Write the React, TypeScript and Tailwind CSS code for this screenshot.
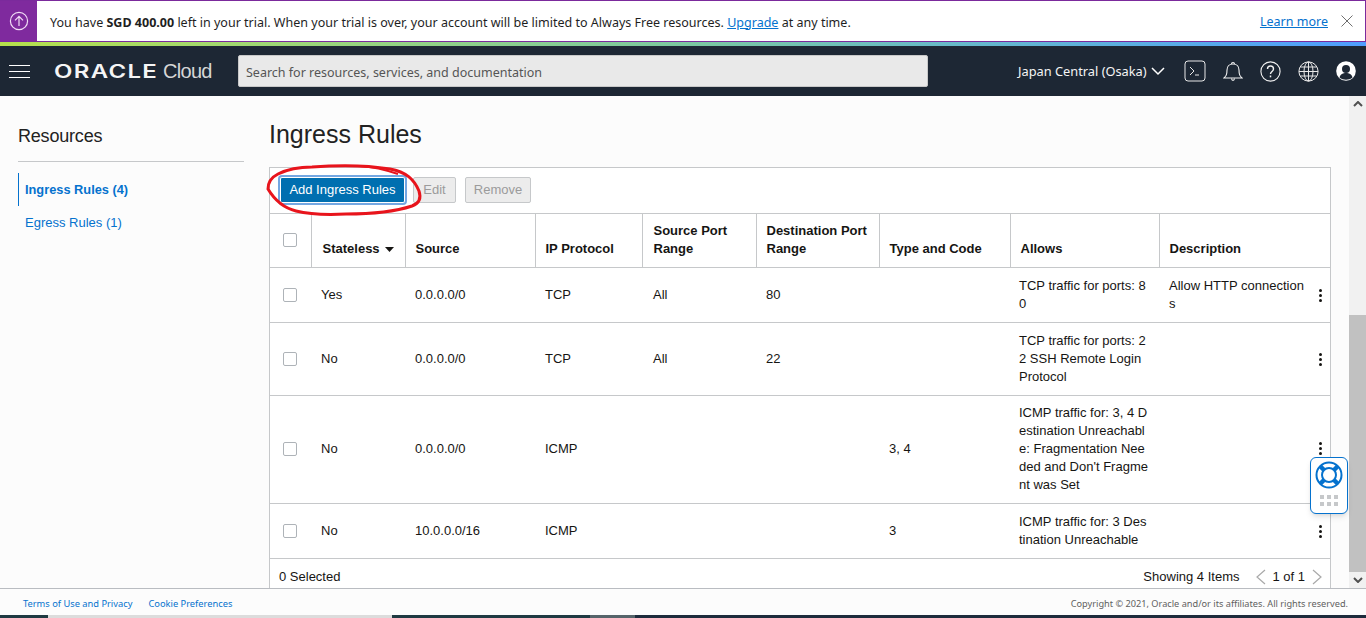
const rows = [
  { h: "h-[55px]", stateless: "Yes", source: "0.0.0.0/0", proto: "TCP", spr: "All", dpr: "80", tc: "", allows: ["TCP traffic for ports: 8", "0"], desc: ["Allow HTTP connection", "s"] },
  { h: "h-[73px]", stateless: "No", source: "0.0.0.0/0", proto: "TCP", spr: "All", dpr: "22", tc: "", allows: ["TCP traffic for ports: 2", "2 SSH Remote Login", "Protocol"], desc: [] },
  { h: "h-[108px] [&>td]:pb-[2px]", stateless: "No", source: "0.0.0.0/0", proto: "ICMP", spr: "", dpr: "", tc: "3, 4", allows: ["ICMP traffic for: 3, 4 D", "estination Unreachabl", "e: Fragmentation Nee", "ded and Don't Fragme", "nt was Set"], desc: [] },
  { h: "h-[55px]", stateless: "No", source: "10.0.0.0/16", proto: "ICMP", spr: "", dpr: "", tc: "3", allows: ["ICMP traffic for: 3 Des", "tination Unreachable"], desc: [] },
];

function Check() {
  return <span className="block w-[14px] h-[14px] bg-white border border-[#aeb3b8] rounded-[2px]" />;
}

function Kebab() {
  return (
    <span className="flex flex-col gap-[2px] w-[3px]">
      <span className="block w-[3px] h-[3px] rounded-full bg-[#161513]" />
      <span className="block w-[3px] h-[3px] rounded-full bg-[#161513]" />
      <span className="block w-[3px] h-[3px] rounded-full bg-[#161513]" />
    </span>
  );
}

export default function App() {
  return (
    <div className="relative w-[1366px] h-[618px] overflow-hidden bg-white text-[#161513] font-['Liberation_Sans',Arial,sans-serif]">
      {/* trial banner */}
      <div className="flex h-[42px] border border-[#7b2a9c] bg-white font-['Noto_Sans',sans-serif] text-[12.53px]">
        <div className="w-[37px] flex items-center justify-center bg-[#7f2a9e] -ml-px">
          <svg width="20" height="20" viewBox="0 0 20 20" fill="none" stroke="#f0dcf5" strokeWidth="1.2">
            <circle cx="10" cy="10" r="8.6" />
            <path d="M10 15V5.5M6 9.3l4-4 4 4" />
          </svg>
        </div>
        <div className="flex-1 flex items-center pl-[13px] pt-[4px] text-[#1f1f1f]">
          <span>You have <b>SGD 400.00</b> left in your trial. When your trial is over, your account will be limited to Always Free resources. <span className="text-[#0572ce] underline">Upgrade</span> at any time.</span>
        </div>
        <span className="self-center text-[#0572ce] underline mr-[13px] pt-[3px]">Learn more</span>
        <svg className="self-center mr-[12px]" width="12" height="12" viewBox="0 0 12 12" stroke="#5f5f5f" strokeWidth="0.9">
          <path d="M.5.5l11 11M11.5.5l-11 11" />
        </svg>
      </div>
      <div className="h-[4px] bg-gradient-to-r from-[#b5e04a] via-[#7cc8a0] to-[#4f9dff]" />

      {/* top nav */}
      <div className="h-[50px] bg-[#1d2734] flex items-center text-white">
        <div className="ml-[9px] w-[21px] flex flex-col gap-[5px]">
          <span className="block h-px bg-white" />
          <span className="block h-px bg-white" />
          <span className="block h-px bg-white" />
        </div>
        <div className="ml-[24px] w-[184px] flex items-center">
          <span className="text-[#f5f5f5] text-[18px] font-semibold tracking-[1px] scale-x-[1.33] origin-left w-[109px] font-['Inter',sans-serif]">ORACLE</span>
          <span className="text-[#d6d6d6] text-[20px] tracking-[-0.7px]">Cloud</span>
        </div>
        <div className="w-[690px] h-[32px] bg-[#e9e9e9] rounded-[2px] flex items-center pl-[7px] pt-[4px] text-[#555] text-[12.5px] font-['Noto_Sans',sans-serif] border border-[#c8c8c8]">
          Search for resources, services, and documentation
        </div>
        <div className="ml-[90px] pt-[2px] text-[12.8px] font-['Noto_Sans',sans-serif] text-[#f5f5f5] whitespace-nowrap">Japan Central (Osaka)</div>
        <svg className="ml-[4px]" width="14" height="9" viewBox="0 0 14 9" fill="none" stroke="#fff" strokeWidth="1.5"><path d="M1 1l6 6 6-6" /></svg>
        <svg className="ml-[19px]" width="22" height="22" viewBox="0 0 22 22" fill="none" stroke="#e8e8e8" strokeWidth="1">
          <rect x="1" y="1" width="20" height="20" rx="3" />
          <path d="M6 7l4 4-4 4M11 15h4" />
        </svg>
        <svg className="ml-[17px]" width="20" height="22" viewBox="0 0 20 22" fill="none" stroke="#f2f2f2" strokeWidth="1.1">
          <path d="M1 18c2-2 3-3 3-8 0-3.500 2.500-6 6-6s6 2.500 6 6c0 5 1 6 3 8z" />
          <path d="M8.500 4c0-2 3-2 3 0M8.500 18.500c.3 2.500 2.700 2.500 3 0" />
        </svg>
        <svg className="ml-[17px]" width="21" height="21" viewBox="0 0 21 21" fill="none" stroke="#f2f2f2" strokeWidth="1.1">
          <circle cx="10.500" cy="10.500" r="9.600" />
          <path d="M7.500 8c0-4 6-4 6 0 0 2.500-3 2.500-3 5" strokeWidth="1.400" />
          <path d="M10.500 14.500v1.800" strokeWidth="1.500" />
        </svg>
        <svg className="ml-[17px]" width="21" height="21" viewBox="0 0 21 21" fill="none" stroke="#e8e8e8" strokeWidth="1">
          <circle cx="10.500" cy="10.500" r="9.600" />
          <ellipse cx="10.500" cy="10.500" rx="4.500" ry="9.600" />
          <path d="M10.500 1v19M1 10.500h19M2.200 6h16.600M2.200 15h16.600" />
        </svg>
        <svg className="ml-[17px]" width="20" height="20" viewBox="0 0 20 20">
          <circle cx="10" cy="10" r="9.800" fill="#fff" />
          <circle cx="10" cy="8" r="4" fill="#1d2734" />
          <path d="M3.500 16.500c1-3.500 3.500-4.500 6.500-4.500s5.500 1 6.500 4.500c-3.500 3-9.500 3-13 0z" fill="#1d2734" />
        </svg>
      </div>

      {/* body */}
      <div className="flex h-[492px] overflow-hidden bg-[#fcfcfc]">
        <aside className="w-[269px] shrink-0 pl-[18px] pr-[25px]">
          <h2 className="mt-[28px] text-[18px] leading-[24px] tracking-[-0.2px] text-[#222] pb-[13px] border-b border-[#c6c8ca]">Resources</h2>
          <nav className="mt-[11px] text-[13px] text-[#0572ce]">
            <div className="h-[33px] pl-[6px] flex items-center font-bold text-[12.8px] border-l border-[#0572ce]">Ingress Rules (4)</div>
            <div className="h-[33px] pl-[7px] flex items-center">Egress Rules (1)</div>
          </nav>
        </aside>

        <main className="w-[1062px] shrink-0">
          <h1 className="mt-[22px] mb-[17px] text-[25px] leading-[32px] text-[#222]">Ingress Rules</h1>
          <div className="border border-[#c6c8ca] bg-white">
            <div className="h-[45px] flex items-center pl-[10px] pb-[1px] text-[13px]">
              <button className="h-[26px] w-[125px] rounded-[2px] text-white outline-2 outline-[#74a7e2] bg-[#006fb0] border border-white">Add Ingress Rules</button>
              <button className="h-[26px] w-[43px] ml-[8px] bg-[#ececec] border border-[#c6c8ca] rounded-[2px] text-[#9b9b9b]">Edit</button>
              <button className="h-[26px] w-[66px] ml-[9px] bg-[#ececec] border border-[#c6c8ca] rounded-[2px] text-[#9b9b9b]">Remove</button>
            </div>
            <table className="table-fixed border-collapse w-full text-[13px] leading-[18px]">
              <colgroup>
                <col className="w-[41px]" />
                <col className="w-[94px]" />
                <col className="w-[130px]" />
                <col className="w-[107px]" />
                <col className="w-[114px]" />
                <col className="w-[123px]" />
                <col className="w-[131px]" />
                <col className="w-[149px]" />
                <col />
              </colgroup>
              <thead>
                <tr className="h-[54px] text-left font-bold align-bottom border-y border-[#c6c8ca]">
                  <th className="align-top pl-[13px] pt-[19px]"><Check /></th>
                  <th className="border-l border-[#c6c8ca] pl-[11px] pb-[9px]">
                    <span className="flex items-center gap-[5px]">Stateless
                      <svg width="9" height="5" viewBox="0 0 9 5" fill="#161513"><path d="M0 0h9L4.500 5z" /></svg>
                    </span>
                  </th>
                  <th className="border-l border-[#c6c8ca] pl-[10px] pb-[9px]">Source</th>
                  <th className="border-l border-[#c6c8ca] pl-[10px] pb-[9px]">IP Protocol</th>
                  <th className="border-l border-[#c6c8ca] pl-[11px] pb-[9px]">Source Port<br />Range</th>
                  <th className="border-l border-[#c6c8ca] pl-[10px] pb-[9px]">Destination Port<br />Range</th>
                  <th className="border-l border-[#c6c8ca] pl-[10px] pb-[9px]">Type and Code</th>
                  <th className="border-l border-[#c6c8ca] pl-[10px] pb-[9px]">Allows</th>
                  <th className="border-l border-[#c6c8ca] pl-[10px] pb-[9px]">Description</th>
                </tr>
              </thead>
              <tbody>
                {rows.map((r, i) => (
                  <tr key={i} className={`${r.h} border-b border-[#c6c8ca]`}>
                    <td className="pl-[13px]"><Check /></td>
                    <td className="pl-[10px]">{r.stateless}</td>
                    <td className="pl-[10px]">{r.source}</td>
                    <td className="pl-[10px]">{r.proto}</td>
                    <td className="pl-[11px]">{r.spr}</td>
                    <td className="pl-[10px]">{r.dpr}</td>
                    <td className="pl-[10px]">{r.tc}</td>
                    <td className="pl-[9px]">{r.allows.map((l) => <div key={l} className="whitespace-nowrap">{l}</div>)}</td>
                    <td className="pl-[10px]">
                      <div className="flex items-center justify-between pr-[8px]">
                        <div>{r.desc.map((l) => <div key={l} className="whitespace-nowrap">{l}</div>)}</div>
                        <Kebab />
                      </div>
                    </td>
                  </tr>
                ))}
              </tbody>
            </table>
            <div className="h-[36px] flex items-center pl-[9px] text-[13px]">
              <span>0 Selected</span>
              <span className="ml-auto">Showing 4 Items</span>
              <svg className="ml-[16px]" width="11" height="16" viewBox="0 0 11 16" fill="none" stroke="#a9a9a9" strokeWidth="1.2"><path d="M10 1L2 8l8 7" /></svg>
              <span className="ml-[6px]">1 of 1</span>
              <svg className="ml-[7px] mr-[7px]" width="11" height="16" viewBox="0 0 11 16" fill="none" stroke="#a9a9a9" strokeWidth="1.2"><path d="M1 1l8 7-8 7" /></svg>
            </div>
          </div>
        </main>

        {/* scrollbar */}
        <div className="ml-auto w-[17px] bg-[#f1f1f1] flex flex-col items-center justify-between relative">
          <svg className="mt-[5px]" width="10" height="6" viewBox="0 0 10 6" fill="none" stroke="#505050" strokeWidth="2"><path d="M1 5l4-4 4 4" /></svg>
          <div className="absolute left-0 top-[219px] w-full h-[257px] bg-[#c1c1c1]" />
          <svg className="mb-[5px]" width="10" height="6" viewBox="0 0 10 6" fill="none" stroke="#505050" strokeWidth="2"><path d="M1 1l4 4 4-4" /></svg>
        </div>
      </div>

      {/* footer */}
      <div className="h-[27px] flex items-center border-t border-[#b9bcc1] bg-[#fcfcfc] pl-[23px] pr-[18px] pt-[3px] font-['Noto_Sans',sans-serif] text-[9.2px]">
        <span className="text-[#0572ce] text-[9.3px]">Terms of Use and Privacy</span>
        <span className="text-[#0572ce] text-[9.3px] ml-[16px]">Cookie Preferences</span>
        <span className="ml-auto text-[#5f5f5f]">Copyright © 2021, Oracle and/or its affiliates. All rights reserved.</span>
      </div>
      {/* sliver of the desktop below the browser */}
      <div className="h-[3px] flex bg-[#1d2b3c]">
        <div className="w-[48px] bg-[#1f3a42]" />
        <div className="w-[344px] bg-[#dcdcdc]" />
        <div className="w-[198px] bg-[#1f3a42]" />
        <div className="w-[45px] bg-[#56646a]" />
      </div>

      {/* annotation drawn on the screenshot */}
      <svg className="absolute left-[262px] top-[162px]" width="164" height="56" viewBox="0 0 164 56" fill="none" stroke="#e8141c" strokeWidth="3">
        <path d="M6 27C6 20 10 15 16 12c8-4 20-7 34-7 26-2 54-2 78 2 16 3 24 10 29 22 2 6 1 12-7 15-18 6-42 8-66 8-20 1-38 0-50-3-12-3-22-12-28-22z" />
        <path d="M98 4c14 1 26 4 38 8" strokeWidth="2" />
      </svg>

      {/* help widget */}
      <div className="absolute left-[1310px] top-[457px] w-[38px] h-[57px] bg-white border border-[#0572ce] rounded-[6px] shadow-md flex flex-col items-center pt-[3px]">
        <svg width="28" height="28" viewBox="0 0 28 28" fill="none" stroke="#0572ce">
          <circle cx="14" cy="14" r="12.500" strokeWidth="2" />
          <circle cx="14" cy="14" r="7" strokeWidth="2" />
          <path d="M9 9L5 5M19 9l4-4M9 19l-4 4M19 19l4 4" strokeWidth="4.500" />
        </svg>
        <div className="grid grid-cols-3 gap-[3px] mt-[6px]">
          {[0, 1, 2, 3, 4, 5].map((n) => <span key={n} className="block w-[4px] h-[4px] bg-[#c6c8ca]" />)}
        </div>
      </div>
    </div>
  );
}
